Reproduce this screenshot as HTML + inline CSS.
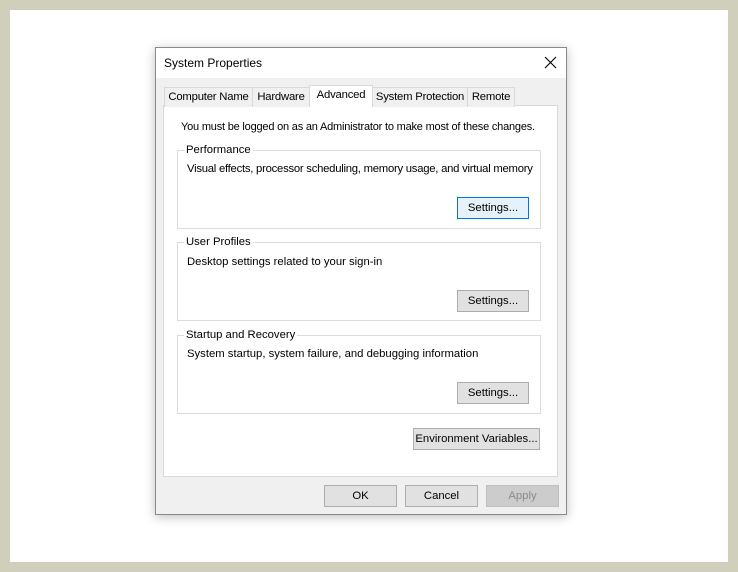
<!DOCTYPE html>
<html><head><meta charset="utf-8"><style>
*{box-sizing:border-box;margin:0;padding:0}
body{width:738px;height:572px;background:#cfcfbb;position:relative;font-family:"Liberation Sans",sans-serif;font-size:11.3px;color:#000;overflow:hidden}
.abs{position:absolute;white-space:nowrap}
#inner{left:10px;top:10px;width:718px;height:552px;background:#fff}
#dlg{left:155px;top:47px;width:412px;height:468px;background:#f0f0f0;border:1px solid #8a8a8a;box-shadow:0 2px 10px rgba(0,0,0,.25)}
#title{left:0;top:0;width:410px;height:30px;background:#fff}
.tab{top:39px;height:20px;border:1px solid #d9d9d9;border-bottom:none;background:#f0f0f0;text-align:center;line-height:19px;letter-spacing:-0.2px}
#panel{left:7px;top:57px;width:395px;height:372px;background:#fff;border:1px solid #d9d9d9}
.grp{left:13px;width:364px;border:1px solid #dcdcdc}
.lg{background:#fff;padding:0 2px;left:6px;top:-8px;line-height:14px}
.btn{border:1px solid #adadad;background:#e1e1e1;text-align:center;line-height:21px;height:22px}
</style></head><body>
<div id="inner" class="abs"></div>
<div id="dlg" class="abs">
 <div id="title" class="abs">
  <div class="abs" style="left:8px;top:8px;font-size:12px">System Properties</div>
  <svg class="abs" style="left:388px;top:8px" width="13" height="13"><path d="M1 1L12 12M12 1L1 12" stroke="#000" stroke-width="1.1"/></svg>
 </div>
 <div id="panel" class="abs">
  <div class="abs" style="left:17px;top:15px;font-size:11px;letter-spacing:-0.2px">You must be logged on as an Administrator to make most of these changes.</div>
  <div class="grp abs" style="top:44px;height:79px"><div class="lg abs">Performance</div>
   <div class="abs" style="left:9px;top:12px;letter-spacing:-0.25px">Visual effects, processor scheduling, memory usage, and virtual memory</div>
   <div class="btn abs" style="left:279px;top:46px;width:72px;border:1px solid #0078d7;background:#e5f1fb">Settings...</div></div>
  <div class="grp abs" style="top:136px;height:79px"><div class="lg abs">User Profiles</div>
   <div class="abs" style="left:9px;top:13px">Desktop settings related to your sign-in</div>
   <div class="btn abs" style="left:279px;top:47px;width:72px">Settings...</div></div>
  <div class="grp abs" style="top:229px;height:79px"><div class="lg abs">Startup and Recovery</div>
   <div class="abs" style="left:9px;top:12px">System startup, system failure, and debugging information</div>
   <div class="btn abs" style="left:279px;top:46px;width:72px">Settings...</div></div>
  <div class="btn abs" style="left:249px;top:322px;width:127px">Environment Variables...</div>
 </div>
 <div class="tab abs" style="left:8px;width:89px">Computer Name</div>
 <div class="tab abs" style="left:96px;width:58px">Hardware</div>
 <div class="tab abs" style="left:216px;width:96px">System Protection</div>
 <div class="tab abs" style="left:311px;width:48px">Remote</div>
 <div class="tab abs" style="left:153px;top:37px;width:64px;height:22px;background:#fff;line-height:18px">Advanced</div>
 <div class="btn abs" style="left:168px;top:437px;width:73px">OK</div>
 <div class="btn abs" style="left:249px;top:437px;width:73px">Cancel</div>
 <div class="btn abs" style="left:330px;top:437px;width:73px;color:#8a8a8a;border-color:#bfbfbf;background:#cccccc">Apply</div>
</div>
</body></html>
